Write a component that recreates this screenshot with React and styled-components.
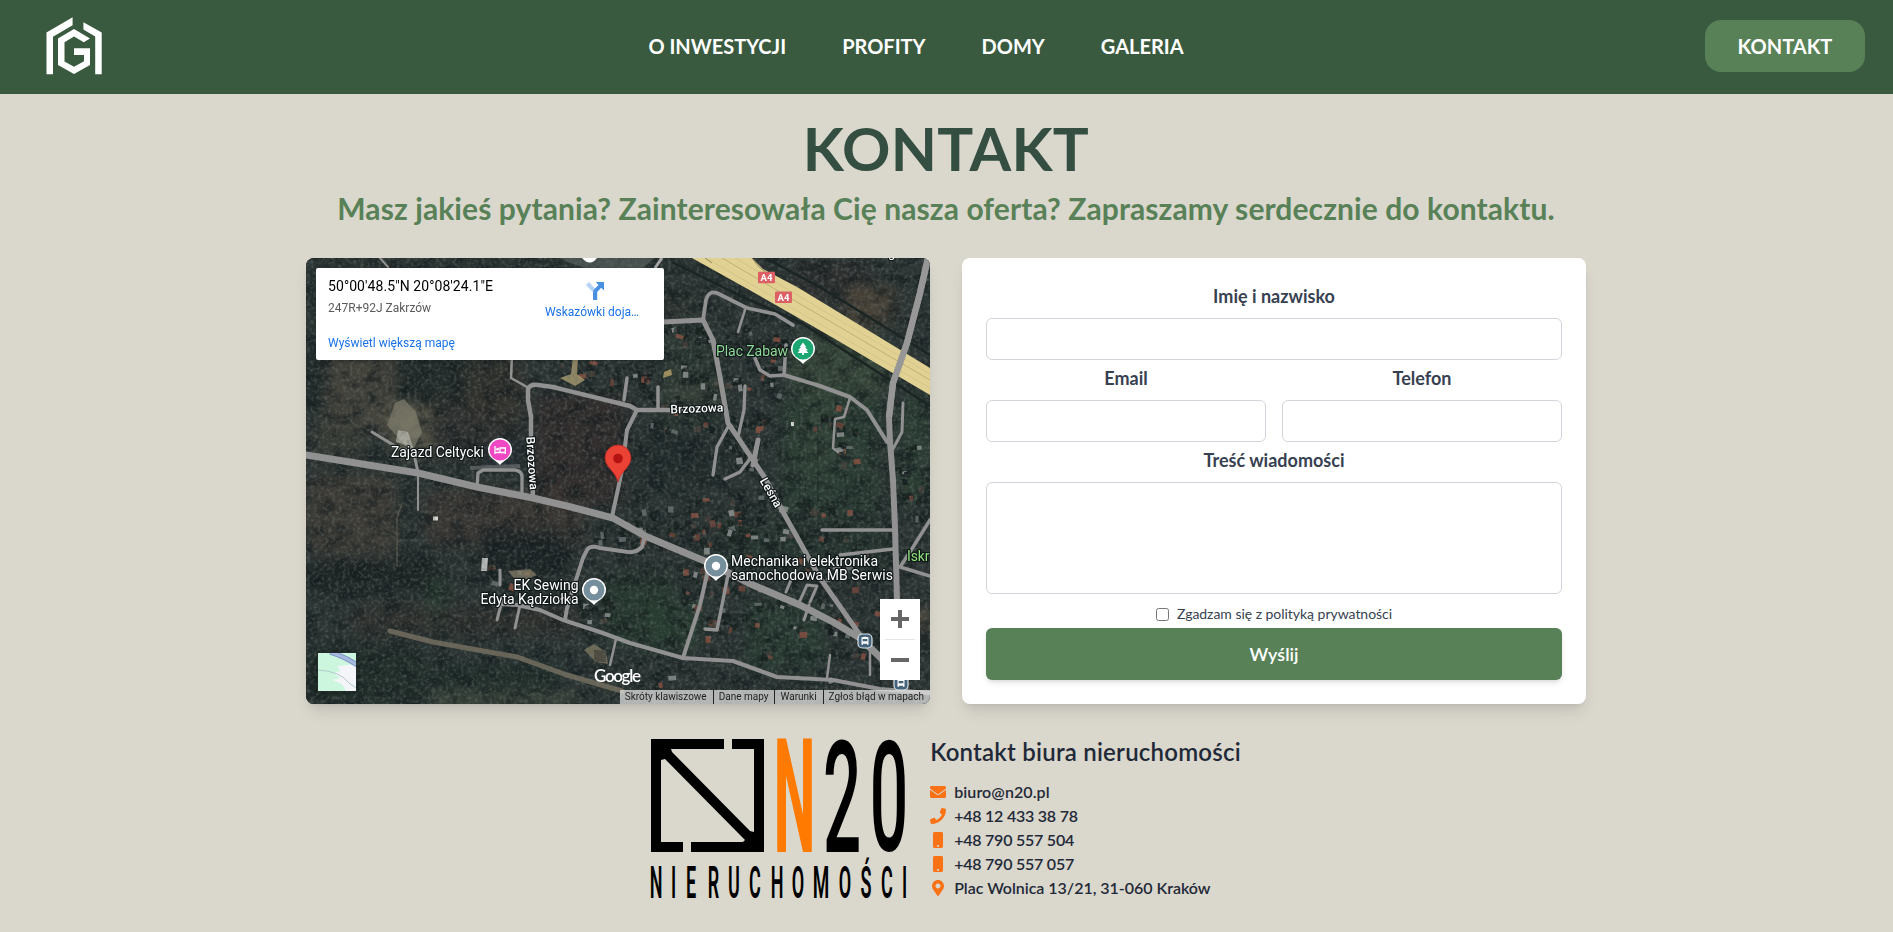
import React from "react";
import styled, { createGlobalStyle } from "styled-components";
import { FaEnvelope, FaPhone, FaMobile, FaMapMarkerAlt } from "react-icons/fa";

const GlobalStyle = createGlobalStyle`
  *, *::before, *::after { box-sizing: border-box; }
  body {
    margin: 0;
    background: #dad7cd;
    font-family: Lato, sans-serif;
    color: #1f2937;
  }
  h1, h2, h3, p, ul { margin: 0; padding: 0; }
`;

const Page = styled.div`
  min-height: 100vh;
  display: flex;
  flex-direction: column;
`;

const Header = styled.header`
  height: 94px;
  padding: 14px 28px 16px;
  display: flex;
  align-items: center;
  justify-content: space-between;
  background: #3a5a40;
`;

const Nav = styled.nav`
  display: flex;
  gap: 56px;
`;

const NavLink = styled.a`
  color: #fff;
  font-size: 20px;
  line-height: 28px;
  font-weight: 700;
  white-space: nowrap;
`;

const NavButton = styled(NavLink)`
  width: 160px;
  padding: 12px 0;
  border-radius: 16px;
  background: #588157;
  text-align: center;
`;

const Main = styled.main`
  display: flex;
  flex-direction: column;
  align-items: center;
  padding: 24px 1px 0 0;
`;

const Title = styled.h1`
  font-size: 60px;
  line-height: 60px;
  font-weight: 700;
  letter-spacing: 0.3px;
  color: #344e41;
`;

const Subtitle = styled.h2`
  margin-top: 12px;
  font-size: 30px;
  line-height: 36px;
  font-weight: 700;
  letter-spacing: 0.09px;
  color: #588157;
  white-space: nowrap;
`;

const Columns = styled.div`
  width: 1280px;
  margin-top: 32px;
  display: grid;
  grid-template-columns: 1fr 1fr;
  gap: 32px;
`;

const Card = styled.section`
  height: 446px;
  border-radius: 8px;
  box-shadow: 0 10px 15px -3px rgba(0, 0, 0, 0.1), 0 4px 6px -4px rgba(0, 0, 0, 0.1);
`;

const MapCard = styled(Card)`
  position: relative;
  overflow: hidden;
  background: #2c3331;
  font-family: Roboto, sans-serif;
`;

const MapCanvas = styled.svg`
  display: block;
  width: 100%;
  height: 100%;
`;

const PlaceBox = styled.div`
  position: absolute;
  top: 10px;
  left: 10px;
  width: 348px;
  height: 92px;
  padding: 9px 12px 0;
  display: flex;
  justify-content: space-between;
  background: #fff;
  border-radius: 2px;
  box-shadow: 0 1px 4px -1px rgba(0, 0, 0, 0.3);
`;

const PlaceInfo = styled.div`
  display: flex;
  flex-direction: column;
`;

const PlaceName = styled.div`
  font-size: 14px;
  line-height: 19px;
  letter-spacing: 0.07px;
  font-weight: 400;
  color: #000;
`;

const PlaceAddress = styled.div`
  margin-top: 4px;
  font-size: 12px;
  line-height: 16px;
  color: #5b5b5b;
`;

const MapLink = styled.a`
  font-size: 12px;
  line-height: 16px;
  color: #1a73e8;
`;

const LargerMapLink = styled(MapLink)`
  margin-top: 19px;
`;

const Directions = styled.div`
  width: 120px;
  padding-top: 3px;
  display: flex;
  flex-direction: column;
  align-items: center;
  gap: 2px;
`;

const DirectionsIcon = styled.svg`
  margin-left: 5px;
`;

const MapTypeButton = styled.div`
  position: absolute;
  left: 11px;
  bottom: 12px;
  width: 40px;
  height: 40px;
  border: 1px solid #222b2b;
  box-shadow: 0 0 4px rgba(0, 0, 0, 0.5);
`;

const ZoomControl = styled.div`
  position: absolute;
  right: 10px;
  bottom: 24px;
  width: 40px;
  height: 81px;
  display: flex;
  flex-direction: column;
  align-items: center;
  background: #fff;
`;

const ZoomKey = styled.div`
  flex: 1;
  width: ${(p) => (p.$divided ? "30px" : "40px")};
  display: flex;
  align-items: center;
  justify-content: center;
  border-bottom: ${(p) => (p.$divided ? "1px solid #e6e6e6" : "0")};
`;

const Attribution = styled.div`
  position: absolute;
  right: 0;
  bottom: 0;
  height: 14px;
  display: flex;
  align-items: center;
  background: rgba(225, 225, 225, 0.75);
  font-size: 10px;
  line-height: 14px;
  color: #222;
  white-space: nowrap;
`;

const AttributionItem = styled.span`
  padding: 0 6px 0 5px;
  border-left: ${(p) => (p.$first ? "0" : "1px solid #222")};
`;

const FormCard = styled(Card)`
  padding: 24px;
  background: #fff;
  display: flex;
  flex-direction: column;
`;

const Field = styled.label`
  display: flex;
  flex-direction: column;
  gap: 8px;
  margin-bottom: 4px;
  text-align: center;
  font-size: 18px;
  line-height: 28px;
  font-weight: 700;
  color: #374151;
`;

const FieldPair = styled.div`
  display: grid;
  grid-template-columns: 1fr 1fr;
  gap: 16px;
`;

const Input = styled.input`
  width: 100%;
  height: 42px;
  padding: 8px 12px;
  border: 1px solid #d1d5db;
  border-radius: 6px;
  background: #fff;
`;

const TextArea = styled.textarea`
  display: block;
  width: 100%;
  height: 112px;
  padding: 8px 12px;
  border: 1px solid #d1d5db;
  border-radius: 6px;
  resize: none;
`;

const Consent = styled.label`
  margin: 6px 0 4px;
  height: 20px;
  display: flex;
  align-items: center;
  justify-content: center;
  gap: 8px;
  font-size: 14px;
  line-height: 20px;
  letter-spacing: -0.03px;
  color: #374151;
`;

const Checkbox = styled.input`
  width: 13px;
  height: 13px;
  margin: 0;
`;

const Submit = styled.button`
  height: 52px;
  border: 0;
  border-radius: 6px;
  background: #588157;
  color: #fff;
  font-family: inherit;
  font-size: 18px;
  font-weight: 600;
  box-shadow: 0 4px 6px -1px rgba(0, 0, 0, 0.1), 0 2px 4px -2px rgba(0, 0, 0, 0.1);
`;

const Office = styled.section`
  margin-top: 32px;
  display: flex;
  align-items: center;
  gap: 24px;
`;

const OfficeTitle = styled.h3`
  margin-bottom: 12px;
  font-size: 24px;
  line-height: 32px;
  font-weight: 600;
  letter-spacing: 0.22px;
  white-space: nowrap;
`;

const ContactList = styled.ul`
  list-style: none;
`;

const ContactRow = styled.li`
  display: flex;
  align-items: center;
  gap: 8px;
  height: 24px;
  font-size: 16px;
  line-height: 24px;
  font-weight: 600;
  letter-spacing: ${(p) => p.$tracking}px;
`;

const ContactIcon = styled.span`
  width: 16px;
  height: 16px;
  display: flex;
  justify-content: center;
  font-size: 16px;
  color: #f97316;
`;

function BrandLogo() {
  return (
    <svg width="99" height="64" viewBox="28 14 99 64" fill="#fff">
      <path d="M46.5 74.2V32.5L72.6 17.3V25.2L53 36.8V74.2Z" />
      <path d="M83.4 22.2L101.7 32.5V74.2H95.2V36.4L83.4 29.6Z" />
      <path d="M74 29L90 38.6L83.8 42.2L74 36.5L64.5 42.2V61.5L74 66.8L84 61.3V55H74V48.3H90V65L74 74L58 65V38.5Z" />
    </svg>
  );
}

const LOGO_LETTERS = [
  ["N", 656], ["I", 673.5], ["E", 691], ["R", 713.5], ["U", 734], ["C", 755], ["H", 777],
  ["O", 798], ["M", 821], ["O", 845], ["Ś", 866], ["C", 887], ["I", 904.5],
];

function Squeezed({ x, y, scale, size, weight = 500, fill = "#000", children }) {
  return (
    <text
      transform={`translate(${x} ${y}) scale(${scale} 1)`}
      fontFamily="Roboto, sans-serif"
      fontSize={size}
      fontWeight={weight}
      fill={fill}
      textAnchor="middle"
    >
      {children}
    </text>
  );
}

function OfficeLogo() {
  return (
    <svg width="255" height="159" viewBox="651 739 255 159" overflow="visible">
      <path d="M651 739H724V749H671L672 752L750 831L754 832V749H732V739H764V852H691V842H743L745 840L665 759L661 760V842H683V852H651Z" />
      <Squeezed x={794.5} y={852} scale={0.375} size={159} weight={700} fill="#ff7a00">N</Squeezed>
      <Squeezed x={842} y={852} scale={0.43} size={156.5}>2</Squeezed>
      <Squeezed x={889} y={850.5} scale={0.44} size={154}>0</Squeezed>
      {LOGO_LETTERS.map(([c, x], i) => (
        <Squeezed key={i} x={x} y={898} weight={600} scale={c === "M" ? 0.42 : 0.4} size={45}>{c}</Squeezed>
      ))}
    </svg>
  );
}

/* [path, width] pairs, in map coordinates */
const ROADS = [
  ["M306 455L418 473L477 487L533 498L567 506L613 518L645 536L707 562L753 585L800 605L833 622L860 638L883 660L905 690", 7],
  ["M512 355L511 378L527 387", 2.5],
  ["M533 498L531 440V417L528 400V389Q530 384 538 385L553 387L630 406L637 410H670L723 408", 4.5],
  ["M637 410L627 430L622 470L612 517", 4],
  ["M640 324L663 322L703 320L713 340L720 377L728 423L765 478L783 512L820 578L860 635", 5],
  ["M703 320L706 300Q709 290 717 293L747 308L775 314L793 325", 3.8],
  ["M745 310L738 332", 2.5],
  ["M786 345L784 375L770 376L760 370L755 358", 3.5],
  ["M784 375L820 386L850 397L867 410L887 442", 4],
  ["M928 258L920 293L907 343L893 383L889 417L890 442L893 480L895 528L897 600", 6],
  ["M903 403L902 432L893 449", 3],
  ["M822 530H893", 3.5],
  ["M840 555L893 549", 3.5],
  ["M930 520L910 552L900 567L930 576", 3.5],
  ["M645 536L642 547Q636 553 628 552L600 548Q590 545 587 550L583 558L567 608L565 620", 4],
  ["M500 604L517 605L540 610L563 620L600 632L630 643L683 658L733 661L777 677L833 680L880 689L930 693", 4],
  ["M708 570L700 605L683 658", 4],
  ["M728 575L717 630L705 629", 3.5],
  ["M745 386L744 410L738 437", 3.3],
  ["M728 427L717 447L713 475", 3.3],
  ["M752 456L740 472L725 479", 3.3],
  ["M758 440L753 465", 5],
  ["M658 387V408M627 378L624 400", 3.5],
  ["M477 487L478 473L483 470H515Q522 471 522 477V494", 3.3],
  ["M372 432L400 449L413 450L418 472", 3],
  ["M850 398L844 417L835 419L833 448L838 452", 2.5],
  ["M380 258L388 267M418 474V510", 2],
  ["M503 597L497 620M520 605L515 628M500 570V585", 3],
  ["M786 592L791 580M798 605L807 585L817 586L810 602M809 605L804 620M760 591L762 587", 3],
  ["M616 639L610 665M830 655L827 678M870 650V675", 2.5],
];

/* [x, y, width, height, colour, opacity] of soft ground patches */
const PATCHES = [
  [300, 340, 80, 70, "#1f2828", 0.9],
  [325, 355, 70, 80, "#4b473e", 0.8],
  [306, 420, 60, 40, "#3a3c36", 0.8],
  [390, 400, 45, 55, "#66614f", 0.8],
  [395, 355, 120, 50, "#222a29", 0.9],
  [430, 400, 90, 60, "#2f302e", 0.8],
  [465, 360, 60, 60, "#37342f", 0.7],
  [535, 395, 90, 110, "#322c2c", 0.9],
  [306, 475, 90, 80, "#423d37", 0.8],
  [425, 490, 160, 55, "#3d3733", 0.8],
  [480, 530, 90, 45, "#1d2325", 0.9],
  [306, 560, 140, 30, "#1d2424", 0.9],
  [428, 578, 18, 55, "#2b4435", 0.9],
  [350, 605, 230, 30, "#32302e", 0.7],
  [306, 648, 120, 56, "#202d29", 0.9],
  [430, 665, 130, 24, "#1f2e29", 0.9],
  [430, 692, 150, 12, "#464f41", 0.8],
  [640, 290, 60, 28, "#2e3330", 0.7],
  [660, 330, 60, 100, "#2d3933", 0.8],
  [665, 380, 55, 30, "#3c433a", 0.6],
  [790, 335, 95, 60, "#364739", 0.9],
  [780, 395, 100, 120, "#2a3d33", 0.9],
  [800, 400, 34, 70, "#35463a", 0.8],
  [790, 262, 80, 40, "#2f2f2f", 0.8],
  [845, 285, 50, 40, "#504639", 0.8],
  [635, 430, 75, 60, "#222b2a", 0.8],
  [640, 600, 60, 50, "#2b3f34", 0.9],
  [745, 600, 80, 70, "#293c33", 0.9],
  [900, 395, 30, 110, "#2c4035", 0.9],
  [905, 605, 25, 30, "#5a5145", 0.8],
  [605, 575, 70, 70, "#273b30", 0.8],
  [720, 520, 170, 50, "#25342e", 0.7],
];

/* [x, y, width, height, count] of areas with buildings */
const SETTLEMENTS = [
  [560, 360, 85, 30, 16],
  [660, 325, 58, 30, 10],
  [640, 365, 75, 65, 24],
  [722, 330, 60, 70, 26],
  [728, 420, 40, 55, 16],
  [625, 505, 140, 45, 34],
  [700, 495, 180, 75, 46],
  [810, 405, 30, 25, 6],
  [835, 405, 20, 60, 9],
  [895, 440, 33, 80, 14],
  [598, 520, 45, 25, 9],
  [480, 565, 45, 45, 14],
  [570, 600, 40, 30, 10],
  [680, 565, 80, 75, 26],
  [780, 600, 60, 40, 10],
  [820, 560, 60, 80, 16],
  [600, 660, 80, 25, 8],
  [760, 645, 110, 35, 9],
];

function makeRandom(seed) {
  let s = seed;
  return () => {
    s = (s * 16807) % 2147483647;
    return s / 2147483647;
  };
}

const ROOFS = ["#6b4339", "#854f40", "#666d6f", "#8f9493", "#161d20", "#1b2426", "#453f3b", "#1a2422"];

const random = makeRandom(77);
const BUILDINGS = SETTLEMENTS.flatMap(([x, y, w, h, n]) =>
  Array.from({ length: n }, () => {
    const bx = x + random() * w;
    const by = y + random() * h;
    return {
      x: bx,
      y: by,
      w: 3 + random() * 5,
      h: 3 + random() * 4,
      turn: -15 + random() * 35,
      fill: ROOFS[Math.floor(random() * ROOFS.length)],
      tree: { x: bx + random() * 10 - 5, y: by + random() * 12 - 6, r: 1.5 + random() * 3 },
    };
  })
);

function Label({ x, y, size = 14, anchor = "start", fill = "#fff", turn = 0, weight = 400, length, children }) {
  return (
    <text
      x={x}
      y={y}
      fontSize={size}
      fontWeight={weight}
      fill={fill}
      textAnchor={anchor}
      transform={turn ? `rotate(${turn} ${x} ${y})` : undefined}
      textLength={length}
      stroke="#111819"
      strokeWidth="2.4"
      strokeLinejoin="round"
      paintOrder="stroke"
    >
      {children}
    </text>
  );
}

function PlacePin({ x, y, fill, children }) {
  return (
    <g transform={`translate(${x} ${y})`}>
      <path d="M0 15C-3 11-12 8-12 0A12 12 0 1 1 12 0C12 8 3 11 0 15Z" fill="#fff" />
      <circle r="10.5" fill={fill} />
      {children}
    </g>
  );
}

function BusStop({ x, y }) {
  return (
    <g transform={`translate(${x} ${y})`}>
      <rect x="-7" y="-7" width="14" height="14" rx="4.5" fill="#45637a" stroke="#dce6ec" strokeWidth="1.2" />
      <path d="M-3.5-3.5Q0-5 3.5-3.5V3.8H2V2.8H-2V3.8H-3.5Z" fill="#fff" />
      <path d="M-2.4-2H2.4V.3H-2.4Z" fill="#45637a" />
    </g>
  );
}

function RoadBadge({ x, y }) {
  return (
    <g>
      <rect x={x} y={y} width="17" height="11.5" rx="1" fill="#dc5f66" />
      <text x={x + 8.5} y={y + 9.2} fontSize="9.5" fontWeight="700" fill="#fff" textAnchor="middle">A4</text>
    </g>
  );
}

function Satellite() {
  return (
    <MapCanvas viewBox="306 258 624 446">
      <defs>
        <filter id="soft" x="-30%" y="-30%" width="160%" height="160%" colorInterpolationFilters="sRGB">
          <feGaussianBlur stdDeviation="7" />
        </filter>
        <filter id="melt" x="-5%" y="-5%" width="110%" height="110%" colorInterpolationFilters="sRGB">
          <feGaussianBlur stdDeviation="0.5" />
        </filter>
        <filter id="grain" x="0" y="0" width="100%" height="100%" colorInterpolationFilters="sRGB">
          <feTurbulence type="fractalNoise" baseFrequency="0.28" numOctaves="3" seed="4" />
          <feColorMatrix values="0 0 0 0 0.42  0 0 0 0 0.46  0 0 0 0 0.44  2 0 0 0 -0.9" />
        </filter>
        <filter id="shade" x="0" y="0" width="100%" height="100%" colorInterpolationFilters="sRGB">
          <feTurbulence type="fractalNoise" baseFrequency="0.06 0.08" numOctaves="4" seed="9" />
          <feColorMatrix values="0 0 0 0 0.06  0 0 0 0 0.09  0 0 0 0 0.1  0 3 0 0 -1.3" />
        </filter>
      </defs>
      <rect x="306" y="258" width="624" height="446" fill="#2b3433" />
      <g filter="url(#soft)">
        {PATCHES.map(([x, y, w, h, fill, opacity], i) => (
          <rect key={i} x={x} y={y} width={w} height={h} rx="12" fill={fill} opacity={opacity} />
        ))}
      </g>
      <g stroke="#17221f" strokeWidth="0.8" opacity="0.7">
        <path d="M800 415V500M818 420V505M780 425V500M845 455V520M870 430V520M645 600L690 612M655 560L640 640M740 590L725 660M770 600L760 670M790 610L785 665M670 520L660 560M700 480L690 545M806 478L805 500L890 505M900 470H930" fill="none" />
      </g>
      <rect x="306" y="258" width="624" height="446" filter="url(#shade)" opacity="0.55" />
      <g filter="url(#melt)">
        {BUILDINGS.map((b, i) => (
          <g key={i}>
            <circle cx={b.tree.x} cy={b.tree.y} r={b.tree.r} fill="#15201d" opacity="0.7" />
            <rect x={b.x} y={b.y} width={b.w} height={b.h} fill={b.fill} opacity="0.85" transform={`rotate(${b.turn} ${b.x} ${b.y})`} />
          </g>
        ))}
        <path d="M573 357L578 358L577 374L585 380L575 386L560 378L571 374Z" fill="#a3966c" opacity="0.85" />
        <path d="M664 372L671 369L672 375L663 378Z" fill="#a3905a" />
        <path d="M395 403L404 399L416 412L422 432L412 452L400 440L387 425Z" fill="#8b8775" opacity="0.6" />
        <path d="M398 430L408 432L414 450L403 444L396 442Z" fill="#bdbab2" opacity="0.7" />
        <path d="M508 571L530 569L537 575L528 579L514 578Z" fill="#8b8269" opacity="0.7" />
        <path d="M584 650L594 644L606 652L608 664L596 662Z" fill="#9b9170" opacity="0.6" />
        <path d="M594 650H606V662H594Z" fill="#4d4a40" />
        <path d="M482 558H488L487 571H481Z" fill="#b6b8b7" />
        <path d="M433 516.5H438V520.5H433ZM791 422H794V426H791Z" fill="#d8d8d4" />
        <path d="M484 442L522 440L520 468L484 470Z" fill="#232b31" opacity="0.8" />
        <path d="M470 468L520 466" stroke="#737a78" strokeWidth="4" opacity="0.6" />
        <path d="M402 503L397 518L397 567" fill="none" stroke="#6a6152" strokeWidth="1.2" opacity="0.7" />
        <path d="M390 631L433 642L517 657L567 675L622 691" fill="none" stroke="#746d5f" strokeWidth="5" strokeLinecap="round" opacity="0.85" />
      </g>
      <rect x="306" y="258" width="624" height="446" filter="url(#grain)" opacity="0.6" />
      <g fill="none" stroke="#1b2524" strokeWidth="2.5">
        <path d="M672 262L745 298L800 322L930 406" />
        <path d="M765 258L825 290L930 355" />
      </g>
      <path d="M560 258L570 263L592 270H640L655 258Z" fill="#606c6a" opacity="0.55" />
      <path d="M655 268L662 258" stroke="#a6a6a6" strokeWidth="3" />
      <g fill="none" stroke="#919191" strokeLinejoin="round" strokeLinecap="round">
        {ROADS.map(([d, w], i) => (
          <path key={i} d={d} strokeWidth={w} />
        ))}
      </g>
      <path d="M692 258H752L763 269L797 287L930 368V395L835 339L753 292Z" fill="#e1d192" />
      <g fill="none" stroke="#c5b87c" strokeWidth="0.7">
        <path d="M722 258L930 380" stroke="#b0a36c" />
        <path d="M735 258L930 374M706 258L930 388" opacity="0.6" />
        <path d="M705 258L712 263M752 258Q757 267 768 274" stroke="#746d50" />
      </g>
      <path d="M928 258L920 293L907 343L893 383L889 417" fill="none" stroke="#979797" strokeWidth="6.5" />
      <path d="M582 258Q590 267 597 258Z" fill="#fff" />
      <RoadBadge x={758} y={271.8} />
      <RoadBadge x={775} y={291.6} />
      <Label x={888} y={256.5} size={13}>g</Label>
      <PlacePin x={500} y={450} fill="#f048c2">
        <path d="M-5-4V4M-5 2.5H5.3V4M5.3 2V-2H0V2" stroke="#fff" strokeWidth="1.3" fill="none" />
        <circle cx="-2.4" cy="-.8" r="1.4" fill="#fff" />
      </PlacePin>
      <PlacePin x={803} y={349} fill="#1ba672">
        <path d="M0-6.5L3.3-2H2L5 1.2H3L5.5 4H.9V6H-.9V4H-5.5L-3 1.2H-5L-2-2H-3.3Z" fill="#fff" />
      </PlacePin>
      <PlacePin x={594} y={590} fill="#768f9c"><circle r="4.2" fill="#fff" /></PlacePin>
      <PlacePin x={716} y={566} fill="#768f9c"><circle r="4.2" fill="#fff" /></PlacePin>
      <path d="M618 482C616 472 605 467 605 458A13 13 0 0 1 631 458C631 467 620 472 618 482Z" fill="#ea4335" stroke="#b8261f" strokeWidth="0.7" />
      <circle cx="618" cy="458.5" r="4.8" fill="#b31412" />
      <BusStop x={865} y={641} />
      <BusStop x={901} y={683} />
      <Label x={484} y={457} anchor="end" length={93}>Zajazd Celtycki</Label>
      <Label x={788} y={356} anchor="end" length={72} fill="#8fd996">Plac Zabaw</Label>
      <Label x={697} y={412.5} size={12} weight={500} anchor="middle" turn={-2} length={53}>Brzozowa</Label>
      <Label x={528} y={463.5} size={12} weight={500} anchor="middle" turn={86} length={53}>Brzozowa</Label>
      <Label x={767.5} y={494.5} size={12} weight={500} anchor="middle" turn={60} length={32}>Leśna</Label>
      <Label x={731} y={566} length={147}>Mechanika i elektronika</Label>
      <Label x={731} y={580} length={162}>samochodowa MB Serwis</Label>
      <Label x={578.5} y={590} anchor="end" length={65}>EK Sewing</Label>
      <Label x={578.5} y={604} anchor="end" length={98}>Edyta Kądziołka</Label>
      <Label x={907} y={561} length={22.5} fill="#8fe07a">Iskr</Label>
      <text x="594" y="682" fontFamily="Lato, sans-serif" fontSize="17" fontWeight="600" fill="#fff" textLength="47">Google</text>
    </MapCanvas>
  );
}

function MapPanel() {
  return (
    <MapCard>
      <Satellite />
      <PlaceBox>
        <PlaceInfo>
          <PlaceName>50°00'48.5"N 20°08'24.1"E</PlaceName>
          <PlaceAddress>247R+92J Zakrzów</PlaceAddress>
          <LargerMapLink>Wyświetl większą mapę</LargerMapLink>
        </PlaceInfo>
        <Directions>
          <DirectionsIcon width="22" height="22" viewBox="0 0 22 22">
            <path d="M5 2L2 5L8.5 12L11.5 9Z" fill="#b5d3f5" />
            <path d="M9 20V12.5Q9 10.5 10.5 9L14.5 5L11.8 2H20V10.5L17.2 7.8L13.2 12V20Z" fill="#4a90e2" />
          </DirectionsIcon>
          <MapLink>Wskazówki doja…</MapLink>
        </Directions>
      </PlaceBox>
      <MapTypeButton>
        <svg width="38" height="38" viewBox="0 0 38 38">
          <rect width="38" height="38" fill="#cdf6df" />
          <path d="M38 11L20 13L22 18L16 20L22 25L14 27L24 31L28 38H38Z" fill="#f3f5f8" />
          <path d="M12 -1Q28 4 39 12" fill="none" stroke="#7f98c9" strokeWidth="5" />
          <path d="M12 -1Q28 4 39 12" fill="none" stroke="#a7badd" strokeWidth="3" />
          <path d="M0 17Q22 18 31 30L38 35" fill="none" stroke="#b4c9cb" />
        </svg>
      </MapTypeButton>
      <ZoomControl>
        <ZoomKey $divided>
          <svg width="18" height="18" viewBox="0 0 18 18"><path d="M7 0H11V7H18V11H11V18H7V11H0V7H7Z" fill="#666" /></svg>
        </ZoomKey>
        <ZoomKey>
          <svg width="18" height="4" viewBox="0 0 18 4"><path d="M0 0H18V4H0Z" fill="#666" /></svg>
        </ZoomKey>
      </ZoomControl>
      <Attribution>
        <AttributionItem $first>Skróty klawiszowe</AttributionItem>
        <AttributionItem>Dane mapy</AttributionItem>
        <AttributionItem>Warunki</AttributionItem>
        <AttributionItem>Zgłoś błąd w mapach</AttributionItem>
      </Attribution>
    </MapCard>
  );
}

const CONTACTS = [
  [FaEnvelope, "biuro@n20.pl", 0.1],
  [FaPhone, "+48 12 433 38 78", -0.23],
  [FaMobile, "+48 790 557 504", -0.23],
  [FaMobile, "+48 790 557 057", -0.23],
  [FaMapMarkerAlt, "Plac Wolnica 13/21, 31-060 Kraków", -0.03],
];

export default function App() {
  return (
    <Page>
      <GlobalStyle />
      <Header>
        <BrandLogo />
        <Nav>
          <NavLink>O INWESTYCJI</NavLink>
          <NavLink>PROFITY</NavLink>
          <NavLink>DOMY</NavLink>
          <NavLink>GALERIA</NavLink>
        </Nav>
        <NavButton>KONTAKT</NavButton>
      </Header>
      <Main>
        <Title>KONTAKT</Title>
        <Subtitle>Masz jakieś pytania? Zainteresowała Cię nasza oferta? Zapraszamy serdecznie do kontaktu.</Subtitle>
        <Columns>
          <MapPanel />
          <FormCard>
            <Field>Imię i nazwisko<Input /></Field>
            <FieldPair>
              <Field>Email<Input type="email" /></Field>
              <Field>Telefon<Input type="tel" /></Field>
            </FieldPair>
            <Field>Treść wiadomości<TextArea /></Field>
            <Consent><Checkbox type="checkbox" />Zgadzam się z polityką prywatności</Consent>
            <Submit>Wyślij</Submit>
          </FormCard>
        </Columns>
        <Office>
          <OfficeLogo />
          <div>
            <OfficeTitle>Kontakt biura nieruchomości</OfficeTitle>
            <ContactList>
              {CONTACTS.map(([Icon, text, tracking]) => (
                <ContactRow key={text} $tracking={tracking}><ContactIcon><Icon /></ContactIcon>{text}</ContactRow>
              ))}
            </ContactList>
          </div>
        </Office>
      </Main>
    </Page>
  );
}
